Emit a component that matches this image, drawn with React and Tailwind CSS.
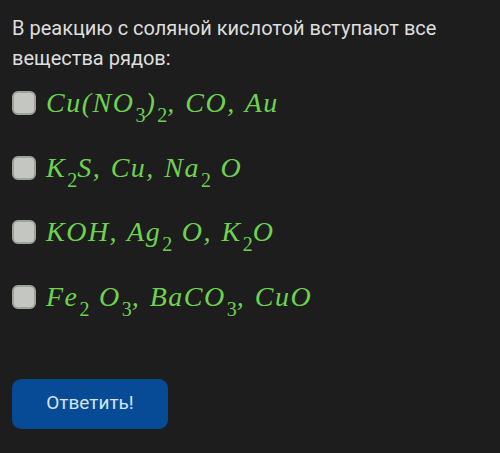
const options = [
  <>Cu(NO<sub>3</sub>)<sub>2</sub>, CO, Au</>,
  <>K<sub>2</sub>S, Cu, Na<sub>2</sub> O</>,
  <>KOH, Ag<sub>2</sub> O, K<sub>2</sub>O</>,
  <>Fe<sub>2</sub> O<sub>3</sub>, BaCO<sub>3</sub>, CuO</>,
]

function Box() {
  return <span className="w-6 h-6 shrink-0 rounded-[6px] bg-[#c4c6c2] border-2 border-[#9da39a]" />
}

export default function App() {
  return (
    <div className="w-[500px] h-[453px] bg-[#1d1d1d] px-3 pt-[13px] font-['Roboto',sans-serif]">
      <p className="text-[#dedede] text-[20px] leading-[30px]">
        В реакцию с соляной кислотой вступают все вещества рядов:
      </p>
      <div className="mt-[18px] flex flex-col gap-[40.5px]">
        {options.map((o, i) => (
          <label key={i} className="flex items-center gap-[10px] h-6">
            <Box />
            <span className="text-[#6dd34f] italic text-[28px] leading-none tracking-[1.5px] [word-spacing:1px] font-['Liberation_Serif',serif] [&_sub]:text-[20px] [&_sub]:not-italic [&_sub]:align-[-5px] [&_sub]:tracking-normal [&_sub]:ml-[1px]">
              {o}
            </span>
          </label>
        ))}
      </div>
      <button className="mt-[70px] w-[156px] h-[50px] rounded-[9px] bg-[#074b96] text-[#d6e4f5] text-[19px]">
        Ответить!
      </button>
    </div>
  )
}
